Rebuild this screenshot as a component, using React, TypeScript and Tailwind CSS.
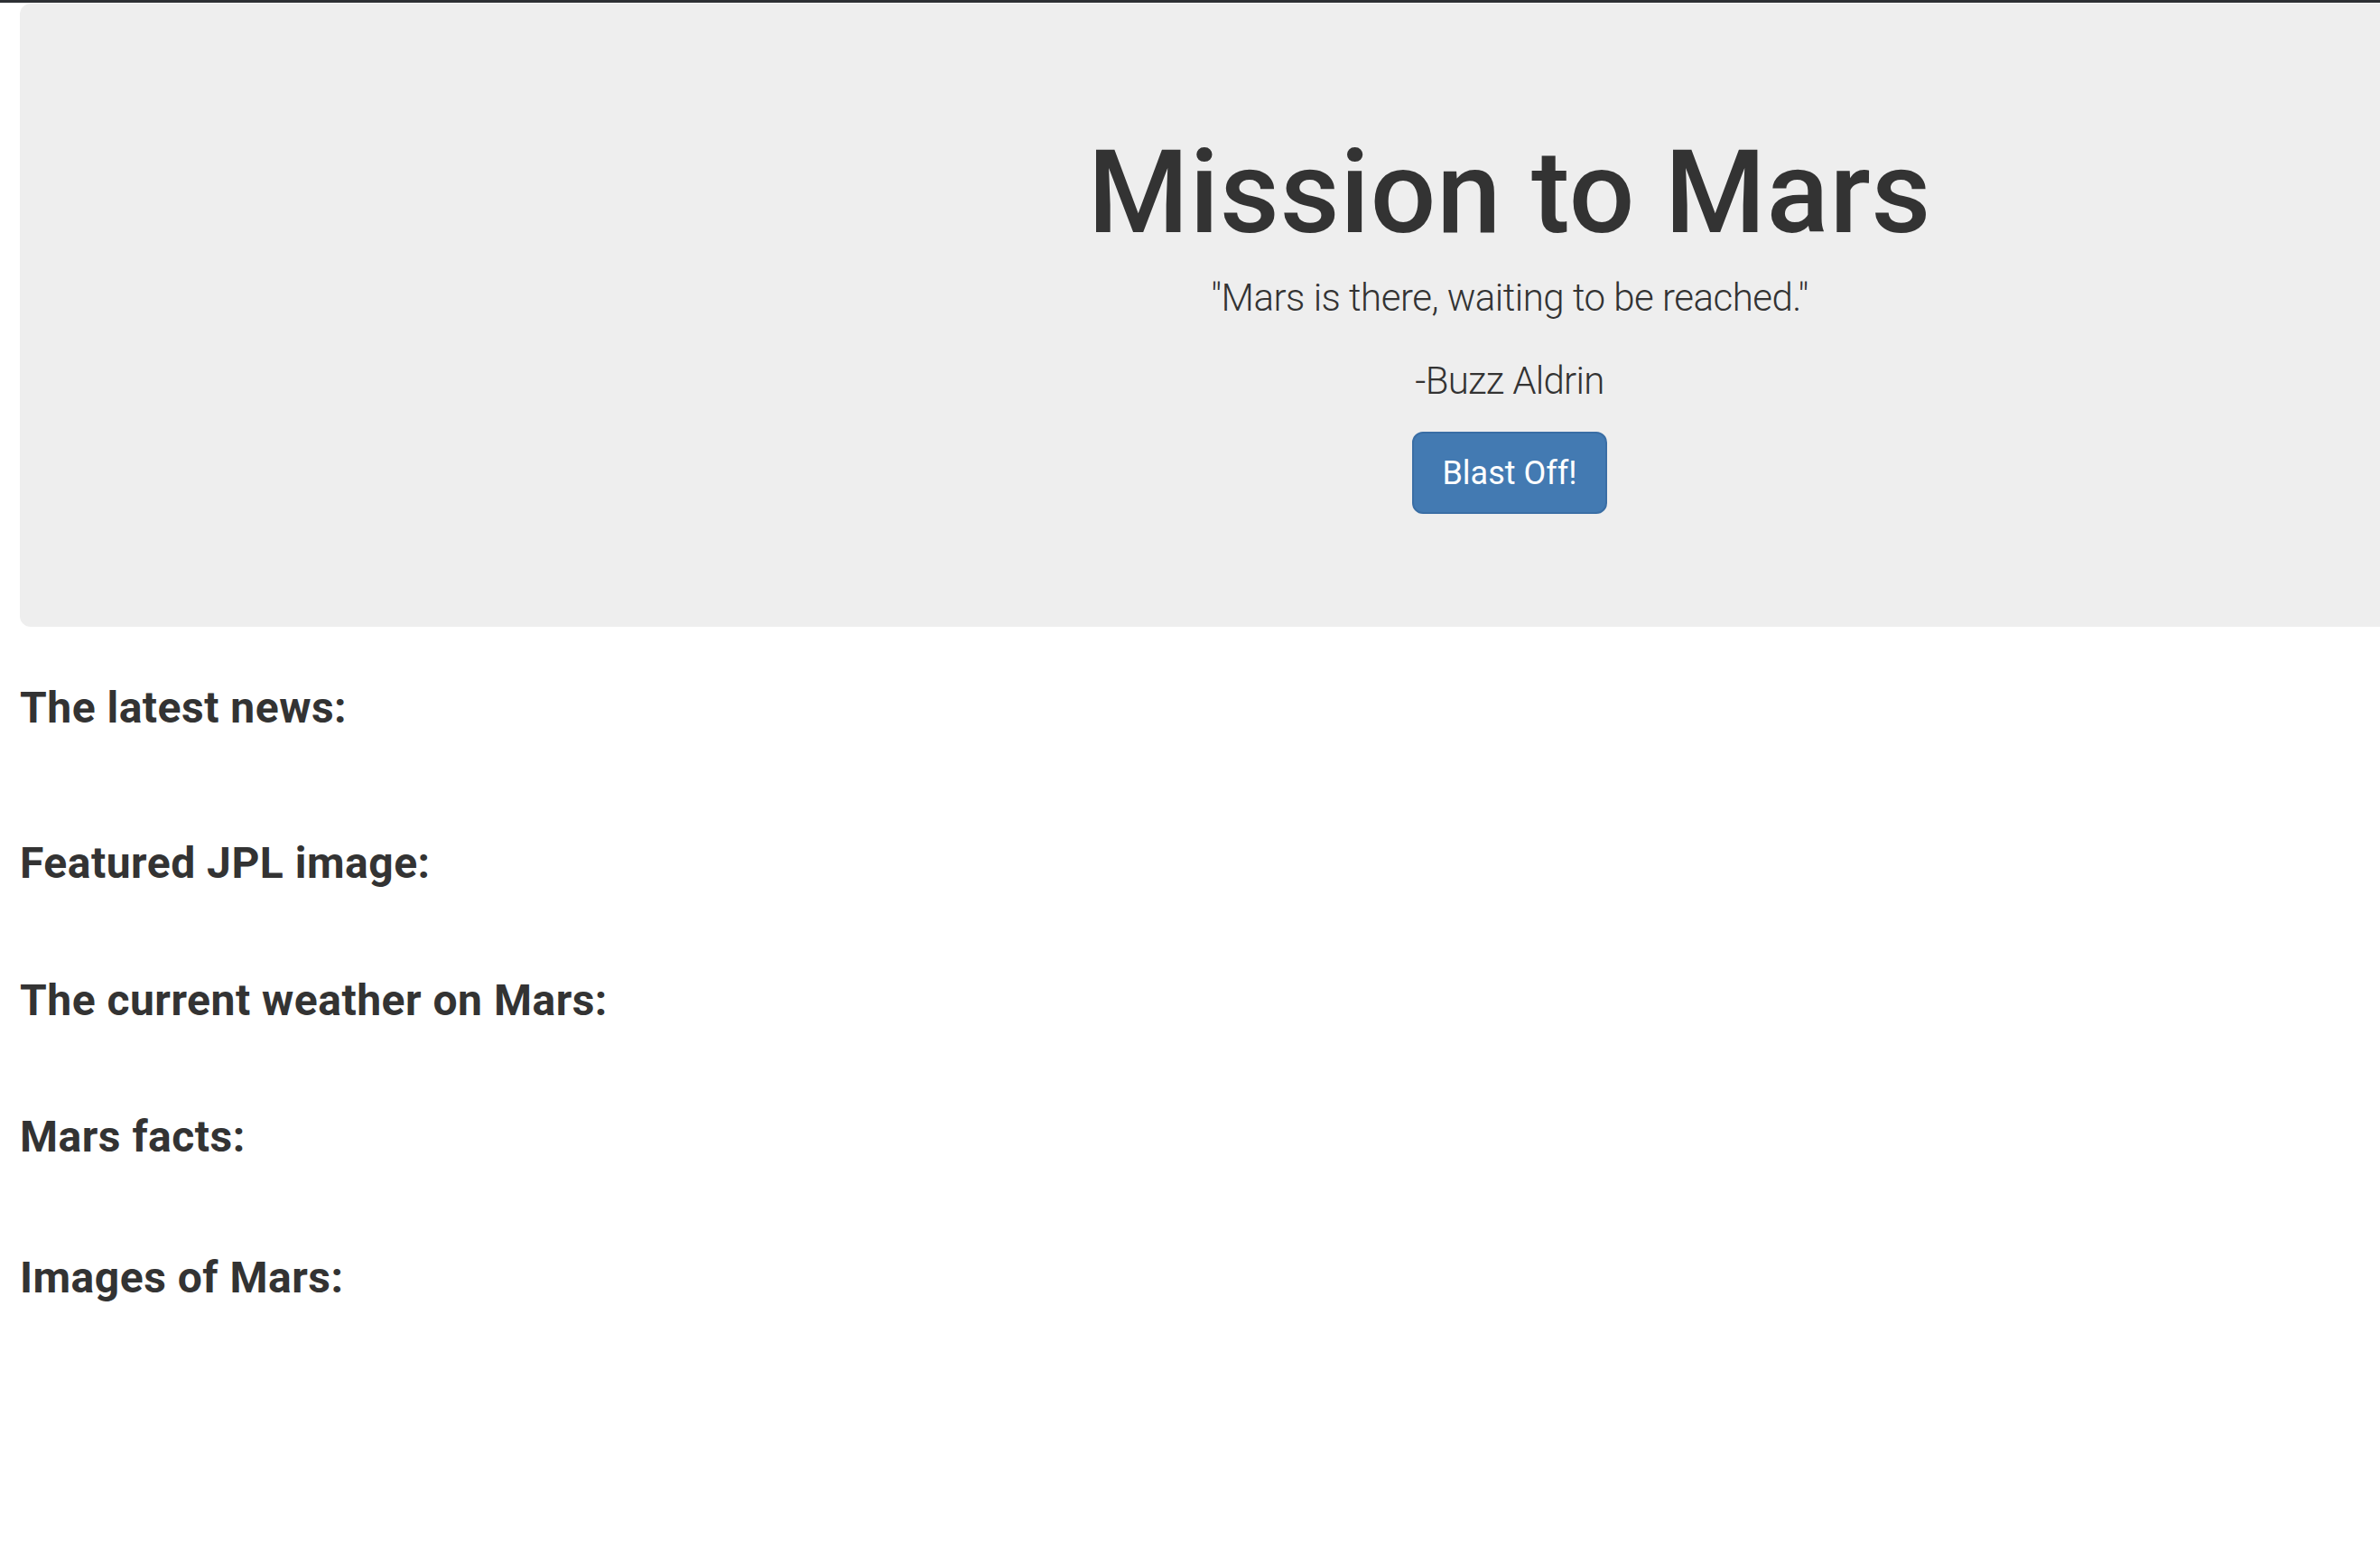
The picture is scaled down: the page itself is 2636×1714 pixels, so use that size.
export default function App() {
  const font = { fontFamily: 'Roboto, "Liberation Sans", Arial, sans-serif' };
  return (
    <div className="w-[2636px] h-[1714px] overflow-hidden bg-white text-[#333333]" style={font}>
      <div className="h-[3px] w-full bg-[#2d3034]" />
      <div className="ml-[22px] mt-[1px] flex h-[690px] w-[3300px] flex-col items-center rounded-[12px] bg-[#eeeeee] pt-[145px]">
        <h1 className="text-[128px] leading-[128px] font-medium tracking-[0.8px]">Mission to Mars</h1>
        <p className="mt-[32px] text-[42px] leading-[42px] font-light tracking-[-0.5px]">"Mars is there, waiting to be reached."</p>
        <p className="mt-[50px] text-[42px] leading-[42px] font-light tracking-[-0.7px]">-Buzz Aldrin</p>
        <button className="mt-[35px] flex h-[91px] w-[216px] items-center justify-center rounded-[12px] border-2 border-[#3a6ea5] bg-[#437ab2] text-[36px] leading-[36px] text-white">
          Blast Off!
        </button>
      </div>
      <div className="pl-[22px]">
        <h3 className="mt-[66px] text-[48px] leading-[48px] font-bold tracking-[0.5px]">The latest news:</h3>
        <h3 className="mt-[124px] text-[48px] leading-[48px] font-bold tracking-[0.5px]">Featured JPL image:</h3>
        <h3 className="mt-[104px] text-[48px] leading-[48px] font-bold tracking-[0.5px]">The current weather on Mars:</h3>
        <h3 className="mt-[103px] text-[48px] leading-[48px] font-bold tracking-[0.5px]">Mars facts:</h3>
        <h3 className="mt-[108px] text-[48px] leading-[48px] font-bold tracking-[0.5px]">Images of Mars:</h3>
      </div>
    </div>
  );
}
